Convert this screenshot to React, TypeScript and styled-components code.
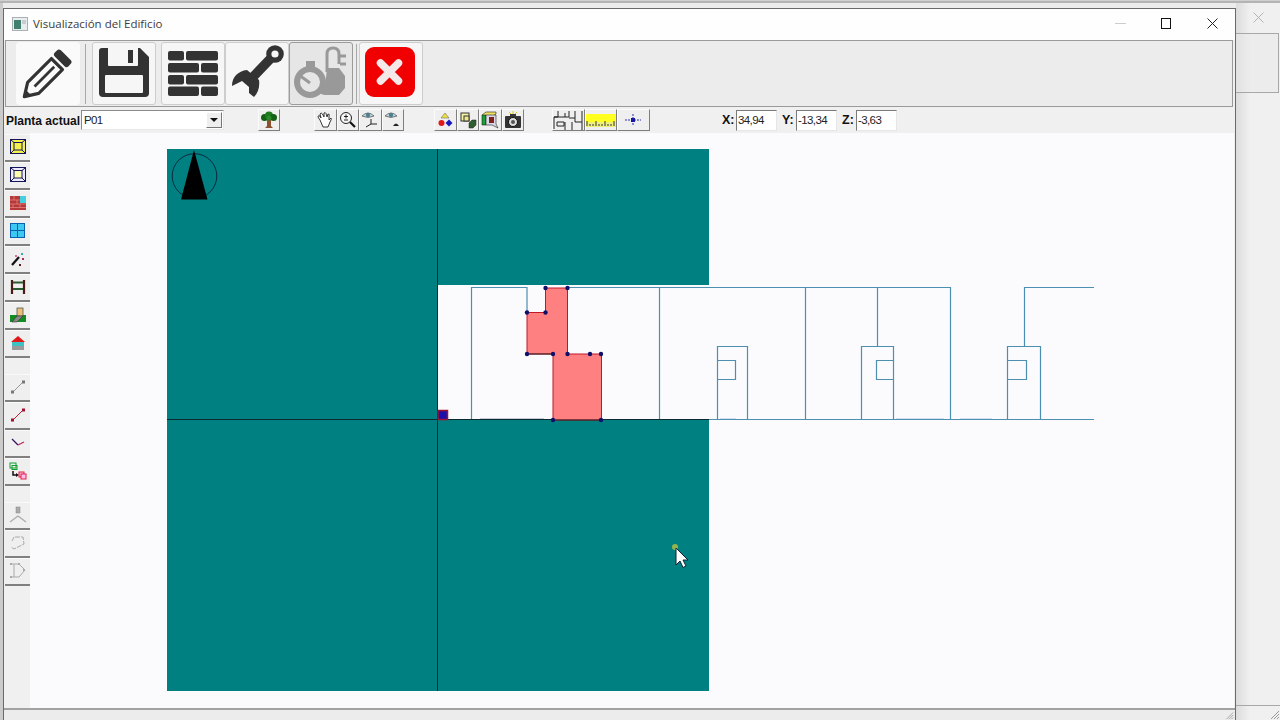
import React from 'react';
import styled, { createGlobalStyle } from 'styled-components';

const GlobalStyle = createGlobalStyle`
  html, body { margin: 0; padding: 0; overflow: hidden; background: #ececec; }
  #root { width: 1280px; height: 720px; }
`;

const Page = styled.div`
  width: 1280px;
  height: 720px;
  display: flex;
  box-sizing: border-box;
  border-top: 1px solid #cfcfcf;
  overflow: hidden;
  font-family: "Liberation Sans", Arial, sans-serif;
  position: relative;
  &::before {
    content: "";
    position: absolute;
    left: 0; right: 0; top: 0;
    height: 2px;
    background: #b4b4b4;
  }
`;

const LeftGutter = styled.div`
  width: 3px;
  background: #cbcbcb;
`;

const Win = styled.div`
  width: 1233px;
  height: 712px;
  margin-top: 7px;
  box-sizing: border-box;
  border: 1px solid #6a6a6a;
  border-bottom: none;
  display: flex;
  flex-direction: column;
  background: #f0f0f0;
  position: relative;
  z-index: 1;
`;

const TitleBar = styled.div`
  height: 31px;
  flex: none;
  background: #fefefe;
  display: flex;
  align-items: center;
  padding: 0 17px 2px 8px;
  box-sizing: border-box;
`;

const TitleText = styled.span`
  font-family: "Open Sans", "Noto Sans", sans-serif;
  font-size: 11.5px;
  color: #3c3c3c;
  margin-left: 5px;
  flex: 1;
`;

const CaptionButton = styled.span<{ $gap: number }>`
  display: flex;
  margin-left: ${p => p.$gap}px;
`;

const MainToolbar = styled.div`
  height: 67px;
  flex: none;
  box-sizing: border-box;
  margin: 0 2px 0 1px;
  border: 1px solid #9a9a9a;
  background: #ececec;
  display: flex;
  align-items: center;
  padding-left: 10px;
`;

const BigButton = styled.button<{ $variant?: 'flat' | 'raised' | 'pressed' }>`
  width: 64px;
  height: 63px;
  padding: 0;
  margin: 0;
  flex: none;
  display: block;
  box-sizing: border-box;
  border-radius: 3px;
  background: ${p => (p.$variant === 'pressed' ? '#e6e6e6' : p.$variant === 'flat' ? '#fafafa' : '#f6f6f6')};
  border: 1px solid ${p => (p.$variant === 'pressed' ? '#9c9c9c' : p.$variant === 'flat' ? '#fafafa' : '#cdcdcd')};
  svg { display: block; }
`;

const BigSeparator = styled.div<{ $left: number; $right: number }>`
  width: 1px;
  height: 60px;
  background: #a8a8a8;
  flex: none;
  margin: 0 ${p => p.$right}px 0 ${p => p.$left}px;
`;

const BigGap = styled.div`
  width: 5px;
  flex: none;
`;

const SecondToolbar = styled.div`
  height: 26px;
  flex: none;
  display: flex;
  align-items: center;
  padding-left: 2px;
  background: #f0f0f0;
`;

const PlantaLabel = styled.label`
  width: 75px;
  flex: none;
  font-size: 12px;
  font-weight: bold;
  color: #111;
  white-space: nowrap;
  padding-top: 1px;
`;

const ComboBox = styled.div`
  width: 143px;
  height: 20px;
  box-sizing: border-box;
  flex: none;
  background: #fff;
  border: 1px solid;
  border-color: #8a8a8a #e8e8e8 #e8e8e8 #8a8a8a;
  display: flex;
  align-items: center;
  justify-content: space-between;
  font-size: 11.5px;
  letter-spacing: -0.6px;
  padding-left: 2px;
  color: #222;
`;

const ComboArrow = styled.span`
  width: 16px;
  height: 16px;
  margin-right: 1px;
  background: #eee;
  border: 1px solid;
  border-color: #fff #777 #777 #fff;
  box-sizing: border-box;
  display: flex;
  align-items: center;
  justify-content: center;
  &::after {
    content: "";
    border: 4px solid transparent;
    border-top: 4px solid #111;
    border-bottom: none;
  }
`;

const ToolGroup = styled.div<{ $offset: number }>`
  display: flex;
  flex: none;
  margin-left: ${p => p.$offset}px;
`;

const SmallButton = styled.button<{ $width: number }>`
  width: ${p => p.$width}px;
  height: 22px;
  padding: 0;
  box-sizing: border-box;
  background: #efefef;
  border: 1px solid;
  border-color: #fbfbfb #7e7e7e #7e7e7e #fbfbfb;
  display: flex;
  align-items: center;
  justify-content: center;
`;

const CoordLabel = styled.span<{ $offset: number }>`
  font-size: 12.5px;
  font-weight: bold;
  color: #111;
  margin-left: ${p => p.$offset}px;
  width: 14px;
  flex: none;
`;

const CoordInput = styled.div`
  width: 41px;
  height: 21px;
  box-sizing: border-box;
  flex: none;
  background: #fff;
  border: 1px solid;
  border-color: #7a7a7a #e6e6e6 #e6e6e6 #7a7a7a;
  font-size: 11.5px;
  letter-spacing: -0.6px;
  line-height: 18px;
  padding-left: 1px;
  color: #222;
`;

const BodyRow = styled.div`
  flex: 1;
  min-height: 0;
  display: flex;
`;

const SideBar = styled.div`
  width: 26px;
  flex: none;
  box-sizing: border-box;
  padding: 1px 0 0 1px;
  background: #f0f0f0;
  display: flex;
  flex-direction: column;
`;

const SideGroup = styled.div`
  display: flex;
  flex-direction: column;
  margin-bottom: 16px;
`;

const SideButton = styled.button`
  width: 25px;
  height: 28px;
  padding: 0 0 2px;
  box-sizing: border-box;
  background: #efefef;
  border: none;
  border-top: 1px solid #fafafa;
  border-bottom: 2px solid #808080;
  display: flex;
  align-items: center;
  justify-content: center;
`;

const Canvas = styled.svg`
  width: 1204px;
  height: 575px;
  display: block;
  flex: none;
  background: #fbfbfd;
`;

const StatusBar = styled.div`
  height: 12px;
  flex: none;
  box-sizing: border-box;
  border-top: 2px solid #a2a2a2;
  background: #ececec;
  display: flex;
  justify-content: flex-end;
  padding-right: 1px;
`;

const BackWindow = styled.div`
  flex: 1;
  display: flex;
  flex-direction: column;
  background: linear-gradient(90deg, #dcdcdc, #f0f0f0 14px);
`;

const BackTitle = styled.div`
  height: 32px;
  flex: none;
  display: flex;
  justify-content: center;
  align-items: flex-end;
  padding: 0 0 10px 0;
  box-sizing: border-box;
`;

const BackPanel = styled.div`
  height: 60px;
  flex: none;
  box-sizing: border-box;
  border: 1px solid #a8a8a8;
  border-left: none;
  margin-right: 1px;
  background: linear-gradient(90deg, #e2e2e2, #ececec 14px);
`;

const BackSpacer = styled.div`
  flex: 1;
`;

const BackStatus = styled.div`
  height: 15px;
  flex: none;
  box-sizing: border-box;
  border-top: 1px solid #a8a8a8;
  display: flex;
  justify-content: flex-end;
  align-items: flex-end;
`;

const Grip = ({ size }: { size: number }) => (
  <svg width={size} height={size} viewBox="0 0 12 12" stroke="#9a9a9a" strokeWidth="1">
    <path d="M11 3 3 11M11 6 6 11M11 9 9 11" />
  </svg>
);

const Dark = '#333';

const PencilIcon = () => (
  <svg width="62" height="61" viewBox="0 0 62 61">
    <g transform="translate(6 55) rotate(-45) scale(.96 .92)">
      <path d="M2 0 15 -8.500H50V8.500H15Z" fill="none" stroke={Dark} strokeWidth="3.400" strokeLinejoin="round" />
      <path d="M17 0H46" stroke={Dark} strokeWidth="3" />
      <path d="M0 0 8 -5V5Z" fill={Dark} />
      <rect x="54" y="-10.500" width="9" height="21" rx="3" fill={Dark} />
    </g>
  </svg>
);

const FloppyIcon = () => (
  <svg width="62" height="61" viewBox="1 1 62 61">
    <path d="M10 6H48L57 15V51Q57 55 53 55H11Q7 55 7 51V9Q7 6 10 6Z" fill={Dark} />
    <path d="M16 6H46V23Q46 24 45 24H17Q16 24 16 23Z" fill="#f6f6f6" />
    <rect x="36" y="8" width="5" height="13" fill={Dark} />
    <rect x="13" y="33" width="38" height="18" rx="1" fill="#f6f6f6" />
  </svg>
);

const brickRows = [9, 21, 33, 44.5];

const BricksIcon = () => (
  <svg width="62" height="61" viewBox="1 1 62 61" fill={Dark}>
    {brickRows.map((y, i) => (
      <React.Fragment key={y}>
        <rect x="7" y={y} width={i % 2 ? 31 : 16} height="9.500" rx="2" />
        <rect x={i % 2 ? 40 : 25} y={y} width={i % 2 ? 17 : 32} height="9.500" rx="2" />
      </React.Fragment>
    ))}
  </svg>
);

const WrenchIcon = () => (
  <svg width="62" height="61" viewBox="1 1 62 61">
    <path d="M50 12 27 36" stroke={Dark} strokeWidth="9.500" />
    <circle cx="50" cy="12" r="8.800" fill={Dark} />
    <circle cx="50" cy="12" r="3.600" fill="#f6f6f6" />
    <path d="M7 44C7 35 13 29 22 28L34 38C35 45 33 51 29 55L24 51 24 45 17 39Z" fill={Dark} />
  </svg>
);

const TimerIcon = () => (
  <svg width="62" height="61" viewBox="1 1 62 61">
    <circle cx="21" cy="40" r="13" fill="#e6e6e6" stroke="#999" strokeWidth="6" />
    <rect x="17" y="19" width="9" height="6" fill="#999" />
    <path d="M10 33 21 41" stroke="#999" strokeWidth="3" />
    <path d="M38 30V12Q38 6 44 6T50 12V22" fill="none" stroke="#999" strokeWidth="3" />
    <path d="M38 26H50L56 34V46L50 53H36Q33 53 31 51Q37 44 37 36Z" fill="#999" />
    <path d="M51 14H57M51 22H57" stroke="#999" strokeWidth="3" />
  </svg>
);

const CloseBigIcon = () => (
  <svg width="62" height="61" viewBox="1 1 62 61">
    <rect x="6" y="5" width="50" height="50" rx="9" fill="#f00000" />
    <path d="M21.500 21 39.500 39M39.500 21 21.500 39" stroke="#f4e8e8" strokeWidth="7.500" strokeLinecap="round" />
  </svg>
);

const Ico = ({ w = 16, h = 16, children }: { w?: number; h?: number; children: React.ReactNode }) => (
  <svg width={w} height={h} viewBox={`0 0 ${w} ${h}`}>{children}</svg>
);

const framed = (fill: string, inner: string) => (
  <Ico>
    <rect x=".5" y=".5" width="15" height="14" fill={fill} stroke="#14145a" />
    <rect x="4" y="3.500" width="8" height="7.500" fill={inner} stroke="#14145a" />
    <path d="M1 1 4 3.500M15 1 12 3.500M1 14 4 11M15 14 12 11" stroke="#14145a" />
  </Ico>
);

const sideGroups: React.ReactNode[][] = [
  [
    framed('#f4f050', '#f4f050'),
    framed('#ecebff', '#fbfbb0'),
    <Ico>
      <rect y="1" width="16" height="14" fill="#b43a3a" />
      <rect x="10" y="1" width="6" height="7" fill="#40d0e0" />
      <path d="M0 5H10M0 9H16M0 12.500H16M4 1V5M7 5V9M3 9V12.500M10 9V12.500" stroke="#e88" strokeWidth=".7" />
    </Ico>,
    <Ico>
      <rect x=".5" y=".5" width="14" height="14" fill="#3cc8f0" stroke="#0a60b0" />
      <path d="M7.500 1V14M1 7.500H14" stroke="#0a60b0" />
    </Ico>,
    <Ico>
      <path d="M2 14 9 6" stroke="#111" strokeWidth="2.200" />
      <path d="M5 4h2v2H5z" fill="#d070a0" />
      <path d="M11 2h2v2h-2z" fill="#30b0b0" />
      <path d="M12 7h2v2h-2z" fill="#a03060" />
      <path d="M9 13h2v2H9z" fill="#502020" />
    </Ico>,
    <Ico>
      <path d="M2 1V15M14 1V15" stroke="#4a1a14" strokeWidth="2.200" />
      <path d="M3 3.500H13M3 10H13" stroke="#2a5a30" strokeWidth="2" />
    </Ico>,
    <Ico>
      <rect y="8" width="16" height="7" fill="#128c20" />
      <rect x="7" y="1" width="6" height="8" fill="#eac078" stroke="#444" strokeWidth=".7" />
      <path d="M7 9H13L7 15H2Z" fill="#888" stroke="#333" strokeWidth=".6" />
    </Ico>,
    <Ico>
      <path d="M8 1 15 7H1Z" fill="#e01818" />
      <rect x="2" y="7" width="12" height="4" fill="#40c0c0" />
      <rect x="2" y="11" width="12" height="4" fill="#9a9a9a" />
    </Ico>,
  ],
  [
    <Ico>
      <path d="M3 13 13 3" stroke="#999" strokeWidth="1" />
      <rect x="1" y="11.500" width="3" height="3" fill="#777" />
      <rect x="12" y="1.500" width="3" height="3" fill="#777" />
    </Ico>,
    <Ico>
      <path d="M3 13 13 3" stroke="#c02030" strokeWidth="1" />
      <rect x="1" y="11.500" width="3" height="3" fill="#a01030" />
      <rect x="12" y="1.500" width="3" height="3" fill="#a01030" />
    </Ico>,
    <Ico>
      <path d="M2 4 8 10" stroke="#301060" strokeWidth="1.300" />
      <path d="M8 10 14 7" stroke="#b03060" strokeWidth="1.300" />
    </Ico>,
    <Ico w={18} h={18}>
      <rect x="1" y="1" width="6" height="5" fill="none" stroke="#10a030" />
      <rect x="3" y="3.500" width="5" height="4" fill="none" stroke="#10a030" />
      <path d="M4 9V13H7" fill="none" stroke="#111" strokeWidth="1.500" />
      <path d="M7 11 10 13 7 15Z" fill="#111" />
      <rect x="10" y="10" width="5" height="5" fill="#fbe" stroke="#e02040" />
      <rect x="12" y="12" width="5" height="5" fill="#fbe" stroke="#e02040" />
    </Ico>,
  ],
  [
    <Ico w={18} h={18}>
      <rect x="7" y="1" width="4" height="6" fill="#aaa" stroke="#888" strokeWidth=".5" />
      <path d="M1 16 9 10 17 16" fill="none" stroke="#aaa" strokeWidth="1.200" />
    </Ico>,
    <Ico w={18} h={18}>
      <path d="M6 3H14L15 10 5 15 2 13M5 3 3 7" fill="none" stroke="#aaa" strokeWidth="1" strokeDasharray="5 1" />
    </Ico>,
    <Ico w={18} h={18}>
      <path d="M2 2H10L16 8 10 15H2M5 2V15" fill="none" stroke="#aaa" strokeWidth="1" />
      <rect x="1" y="1" width="2" height="2" fill="#aaa" />
      <rect x="1" y="14" width="2" height="2" fill="#aaa" />
      <rect x="9" y="1" width="2" height="2" fill="#aaa" />
      <rect x="14" y="7" width="2" height="2" fill="#aaa" />
    </Ico>,
  ],
];

const TreeIcon = () => (
  <Ico w={18} h={18}>
    <path d="M7 8H11L11 15 13 17H5L7 15Z" fill="#8a5230" />
    <circle cx="4.500" cy="6.500" r="3.500" fill="#146014" />
    <circle cx="9" cy="4.500" r="4" fill="#1c7a1c" />
    <circle cx="13.500" cy="6.500" r="3.500" fill="#146014" />
    <circle cx="9" cy="7" r="2.500" fill="#2a8a2a" />
  </Ico>
);

const HandIcon = () => (
  <Ico w={18} h={18}>
    <path d="M4 9 2 6Q2 4 4 5L5 7 4 3Q5 1 6.500 3L8 6 8 2Q9.500 1 10 2.500L11 6 12 3Q14 3 13 5L13 9 15 7Q16 8 14 11L12 16H7Z" fill="#fff" stroke="#222" strokeWidth=".9" strokeLinejoin="round" />
  </Ico>
);

const ZoomIcon = () => (
  <Ico w={18} h={18}>
    <circle cx="7" cy="7" r="5.500" fill="#f6f6f6" stroke="#222" />
    <path d="M5 5.500H9M7 3.500V7.500M5 9H9" stroke="#222" />
    <path d="M11 11 16 16" stroke="#111" strokeWidth="2.200" />
  </Ico>
);

const Eye = () => (
  <>
    <path d="M1 5Q7 -1 13 5 7 8 1 5Z" fill="#c8d8e0" stroke="#333" strokeWidth=".6" />
    <circle cx="7" cy="4" r="2.200" fill="#508090" />
  </>
);

const EyeAxisIcon = () => (
  <Ico w={18} h={18}>
    <Eye />
    <path d="M10 8V13M10 13 5 16M10 13H16" fill="none" stroke="#222" />
  </Ico>
);

const EyeSunIcon = () => (
  <Ico w={18} h={18}>
    <Eye />
    <path d="M9 15Q12 10 15 15Z" fill="#222" />
  </Ico>
);

const ShapesIcon = () => (
  <Ico w={18} h={18}>
    <path d="M9 2 13 7H5Z" fill="#f0e040" stroke="#555" strokeWidth=".5" />
    <circle cx="5.500" cy="12" r="3" fill="#e01818" />
    <path d="M13 8.500 16.500 12 13 15.500 9.500 12Z" fill="#1818c0" />
  </Ico>
);

const CubesIcon = () => (
  <Ico w={18} h={18}>
    <rect x="2" y="2" width="8" height="8" fill="#f0f0a0" stroke="#333" />
    <rect x="5" y="5" width="5" height="5" fill="#f0e890" stroke="#333" />
    <path d="M10 12 13 9H17V14L14 17H10Z" fill="#2f5f2f" stroke="#222" strokeWidth=".5" />
  </Ico>
);

const BoxIcon = () => (
  <Ico w={18} h={18}>
    <path d="M1 4 5 1H15V3L12 5H2Z" fill="#f0e060" stroke="#222" strokeWidth=".6" />
    <path d="M1 4H5V14H1Z" fill="#18a030" stroke="#222" strokeWidth=".6" />
    <path d="M5 4H15V13L17 17 11 14H5Z" fill="#d8d8e8" stroke="#222" strokeWidth=".6" />
    <path d="M8 6H13V12H8Z" fill="#802018" />
  </Ico>
);

const CameraIcon = () => (
  <Ico w={18} h={18}>
    <path d="M5 1 7 3M13 1 11 3M9 0V3" stroke="#d8c820" />
    <rect x="1" y="5" width="16" height="12" rx="1" fill="#333" />
    <rect x="6" y="3" width="6" height="3" fill="#333" />
    <circle cx="9" cy="11" r="4.500" fill="#ddd" stroke="#111" />
    <circle cx="9" cy="11" r="2" fill="#555" />
  </Ico>
);

const PlanIcon = () => (
  <Ico w={30} h={20}>
    <path d="M5 1V7H1V19M1 7H12V3M12 7H16V1M22 1V8H16M22 8V12H29M29 1V20M19 12V20M12 12V20M4 12H11V16H4Z" fill="none" stroke="#222" />
  </Ico>
);

const RulerIcon = () => (
  <Ico w={30} h={16}>
    <rect y="2" width="30" height="8" fill="#ffff20" />
    <rect y="10" width="30" height="5" fill="#efef80" />
    <path d="M1 14V9M4 14V12M7 14V12M10 14V9M13 14V12M16 14V12M19 14V9M22 14V12M25 14V12M28 14V9" stroke="#333" />
  </Ico>
);

const PointIcon = () => (
  <Ico w={18} h={18}>
    <path d="M1 9H17" stroke="#2030b0" strokeDasharray="2 1" />
    <path d="M9 3V15" stroke="#2030b0" strokeDasharray="2 1" />
    <rect x="7" y="7" width="4" height="4" fill="#1818a0" />
  </Ico>
);

const IconGroup = ({ offset, width, icons }: { offset: number; width: number; icons: React.ReactNode[] }) => (
  <ToolGroup $offset={offset}>
    {icons.map((node, i) => <SmallButton key={i} $width={width}>{node}</SmallButton>)}
  </ToolGroup>
);

const Line = styled.path`
  fill: none;
  stroke: #4c8fb0;
  stroke-width: 1.2;
`;

const vertices: [number, number][] = [
  [545.5, 288], [567.5, 288], [527, 312.5], [545.5, 312.5], [527, 354], [553, 354],
  [567.5, 354], [590, 354], [601, 354], [553, 420], [601, 420],
];

const wallPath = `
  M471.500 419V287.500H527V312
  M568 287.500H950.500V419
  M659.500 287.500V419
  M805.500 287.500V419
  M877.500 287.500V346.500
  M1024.500 346.500V287.500H1094
  M709 419.500H1094
  M717.500 419V346.500H747.500V419
  M717.500 360.500H735.500V379.500H717.500
  M861.500 419V346.500H893.500V419
  M893.500 360.500H876.500V379.500H893.500
  M1007.500 419V346.500H1040.500V419
  M1007.500 360.500H1026.500V379.500H1007.500
`;

const Drawing = () => (
  <Canvas viewBox="30 133 1204 575">
    <rect x="167" y="149" width="542" height="542" fill="#008080" />
    <rect x="438" y="285" width="271" height="134" fill="#fbfbfd" />
    <path d="M437.500 149V691M167 419.500H709" stroke="#0a2a30" strokeWidth="1" fill="none" />
    <circle cx="194.500" cy="176" r="22.300" fill="none" stroke="#0a2a40" strokeWidth="1" />
    <path d="M194 150 207.500 199.500H181Z" fill="#000" />
    <Line d={wallPath} />
    <path d="M480 418.500H544" stroke="#c8ccd4" strokeWidth="1" />
    <path d="M720 418.500H736M896 418.500H944M960 418.500H992" stroke="#d4e2ee" strokeWidth="1" />
    <path d="M545.500 288H567.500V354H601.500V420H553V354H527V312.500H545.500Z" fill="#ff8080" stroke="#c01828" strokeWidth="1" />
    <path d="M527 354H553M553 420H601" stroke="#222" strokeWidth="1" />
    {vertices.map(([x, y]) => <circle key={`${x}-${y}`} cx={x} cy={y} r="2.200" fill="#10106a" />)}
    <rect x="438" y="410.500" width="9.500" height="9" fill="#1c10a8" stroke="#a01030" strokeWidth="1.500" />
    <circle cx="675" cy="547" r="3" fill="#b8c040" opacity="0.8" />
    <path d="M676 548V565L680 561 683 567.500 686 566 683 560H688Z" fill="#fff" stroke="#123" strokeWidth="1" />
  </Canvas>
);

export default function App() {
  return (
    <>
      <GlobalStyle />
      <Page>
        <LeftGutter />
        <Win>
          <TitleBar>
            <svg width="16" height="14" viewBox="0 0 16 14">
              <rect x=".5" y=".5" width="15" height="13" fill="#e8eef0" stroke="#a8b0b4" />
              <rect x="2" y="3" width="7" height="9" fill="#408070" />
              <rect x="10" y="3" width="4" height="4" fill="#c8ccd0" />
            </svg>
            <TitleText>Visualización del Edificio</TitleText>
            <CaptionButton $gap={0}>
              <svg width="11" height="11" viewBox="0 0 11 11"><path d="M0 5.500H11" stroke="#ccc" /></svg>
            </CaptionButton>
            <CaptionButton $gap={35}>
              <svg width="11" height="11" viewBox="0 0 11 11"><rect x=".5" y=".5" width="9" height="10" fill="none" stroke="#111" /></svg>
            </CaptionButton>
            <CaptionButton $gap={35}>
              <svg width="11" height="11" viewBox="0 0 11 11"><path d="M.5 .5 10.500 10.500M10.500 .5 .5 10.500" stroke="#222" /></svg>
            </CaptionButton>
          </TitleBar>
          <MainToolbar>
            <BigButton $variant="flat"><PencilIcon /></BigButton>
            <BigSeparator $left={5} $right={6} />
            <BigButton><FloppyIcon /></BigButton>
            <BigGap />
            <BigButton><BricksIcon /></BigButton>
            <BigButton><WrenchIcon /></BigButton>
            <BigButton $variant="pressed"><TimerIcon /></BigButton>
            <BigSeparator $left={3} $right={2} />
            <BigButton><CloseBigIcon /></BigButton>
          </MainToolbar>
          <SecondToolbar>
            <PlantaLabel>Planta actual</PlantaLabel>
            <ComboBox>P01<ComboArrow /></ComboBox>
            <IconGroup offset={34} width={22} icons={[<TreeIcon />]} />
            <IconGroup offset={34} width={22.5} icons={[<HandIcon />, <ZoomIcon />, <EyeAxisIcon />, <EyeSunIcon />]} />
            <IconGroup offset={30} width={22.5} icons={[<ShapesIcon />, <CubesIcon />, <BoxIcon />, <CameraIcon />]} />
            <IconGroup offset={28} width={32.5} icons={[<PlanIcon />, <RulerIcon />, <PointIcon />]} />
            <CoordLabel $offset={72.5}>X:</CoordLabel>
            <CoordInput>34,94</CoordInput>
            <CoordLabel $offset={5}>Y:</CoordLabel>
            <CoordInput>-13,34</CoordInput>
            <CoordLabel $offset={5}>Z:</CoordLabel>
            <CoordInput>-3,63</CoordInput>
          </SecondToolbar>
          <BodyRow>
            <SideBar>
              {sideGroups.map((group, g) => (
                <SideGroup key={g}>
                  {group.map((node, i) => <SideButton key={i}>{node}</SideButton>)}
                </SideGroup>
              ))}
            </SideBar>
            <Drawing />
          </BodyRow>
          <StatusBar><Grip size={10} /></StatusBar>
        </Win>
        <BackWindow>
          <BackTitle>
            <svg width="11" height="11" viewBox="0 0 11 11"><path d="M.5 .5 10.500 10.500M10.500 .5 .5 10.500" stroke="#b4b4b4" /></svg>
          </BackTitle>
          <BackPanel />
          <BackSpacer />
          <BackStatus><Grip size={12} /></BackStatus>
        </BackWindow>
      </Page>
    </>
  );
}
